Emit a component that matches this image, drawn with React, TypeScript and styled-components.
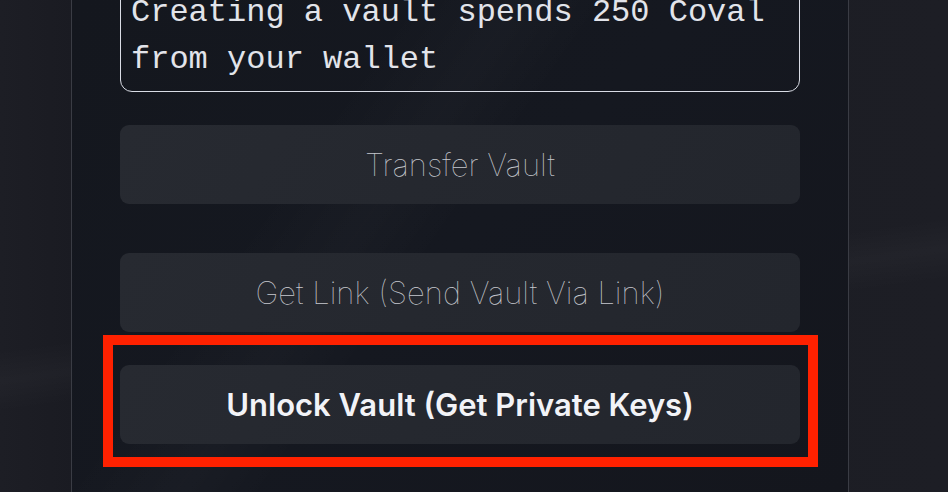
import React from 'react';
import styled, { createGlobalStyle } from 'styled-components';

const GlobalStyle = createGlobalStyle`
	html, body {
		margin: 0;
		padding: 0;
		width: 948px;
		height: 492px;
		overflow: hidden;
		background: #1b1c22;
	}
	* {
		box-sizing: border-box;
	}
`;

const Page = styled.div`
	width: 948px;
	height: 492px;
	display: flex;
	padding-left: 71px;
	background:
		linear-gradient(172deg, transparent 56%, rgba(255, 255, 255, 0.025) 61%, transparent 66%),
		linear-gradient(90deg, #1d1e25 0%, #1a1b22 8%, #1d1e25 100%);
	overflow: hidden;
`;

const Panel = styled.main`
	width: 778px;
	height: 100%;
	border-left: 1px solid #3a3c44;
	border-right: 1px solid #3a3c44;
	background:
		linear-gradient(125deg, transparent 30%, rgba(255, 255, 255, 0.018) 40%, transparent 48%),
		linear-gradient(135deg, #14171e 0%, #151820 50%, #14161d 100%);
	padding: 0 48px;
	display: flex;
	flex-direction: column;
`;

const Notice = styled.div`
	margin-top: -20px;
	padding: 8px 9px 8px 10px;
	border: 1.5px solid #d9dce5;
	border-radius: 12px;
	font-family: 'Liberation Mono', 'Courier New', monospace;
	font-size: 32px;
	line-height: 47px;
	color: #e2e4ea;
	white-space: pre-wrap;
`;

const ActionButton = styled.button<{ $strong?: boolean }>`
	display: flex;
	align-items: center;
	justify-content: center;
	width: 100%;
	height: 79px;
	border: none;
	border-radius: 9px;
	background: linear-gradient(120deg, #272a31 0%, #25282f 45%, #23262d 100%);
	font-family: Inter, 'Noto Sans', sans-serif;
	font-size: 31px;
	font-weight: ${p => (p.$strong ? 600 : 100)};
	color: ${p => (p.$strong ? '#f2f3f7' : '#c6c8ce')};
	cursor: pointer;
`;

const Stack = styled.div`
	display: flex;
	flex-direction: column;
	margin-top: 33px;
`;

const Gap = styled.div<{ $h: number }>`
	height: ${p => p.$h}px;
	flex: none;
`;

const Highlighted = styled.div`
	position: relative;
`;

const Marker = styled.div`
	position: absolute;
	left: -17px;
	right: -18px;
	top: -30px;
	bottom: -23px;
	border: 10px solid #ff2100;
	pointer-events: none;
`;

export default function App() {
	return (
		<>
			<GlobalStyle />
			<Page>
				<Panel>
					<Notice>{'Creating a vault spends 250 Coval\nfrom your wallet'}</Notice>
					<Stack>
						<ActionButton>Transfer Vault</ActionButton>
						<Gap $h={49} />
						<ActionButton>Get Link (Send Vault Via Link)</ActionButton>
						<Gap $h={33} />
						<Highlighted>
							<ActionButton $strong>Unlock Vault (Get Private Keys)</ActionButton>
							<Marker />
						</Highlighted>
					</Stack>
				</Panel>
			</Page>
		</>
	);
}
